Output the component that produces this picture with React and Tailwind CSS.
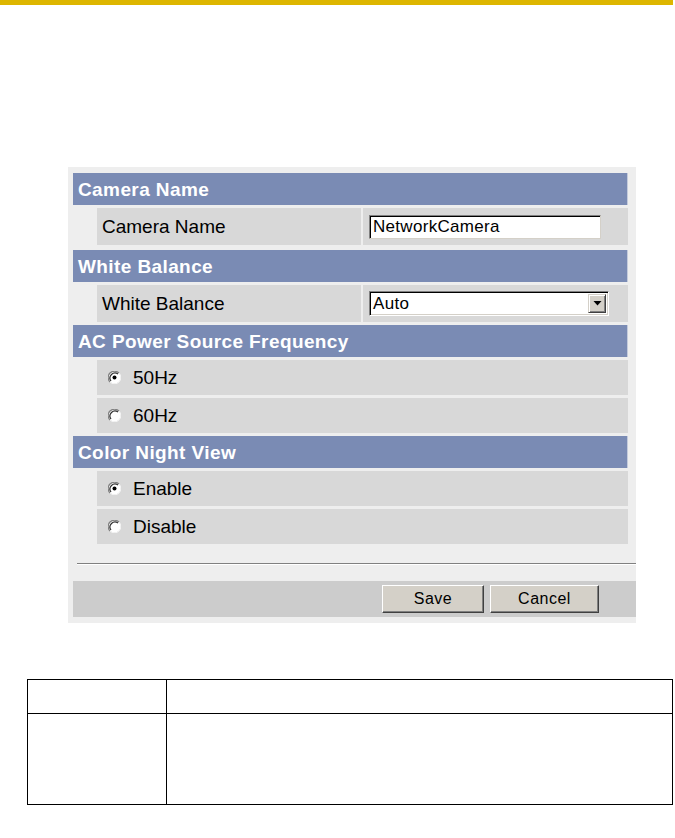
import React from "react";

function Radio({ checked }) {
  return (
    <svg width="13" height="13" viewBox="0 0 13 13" className="shrink-0">
      <circle cx="6.5" cy="6.5" r="6" fill="#ffffff" />
      <path d="M11 2 A6 6 0 0 0 2 11" fill="none" stroke="#808080" strokeWidth="1.2" />
      <path d="M10 3 A5 5 0 0 0 3 10" fill="none" stroke="#303030" strokeWidth="1.2" />
      <path d="M2 11 A6 6 0 0 0 11 2" fill="none" stroke="#f4f4f4" strokeWidth="1" />
      {checked && <circle cx="6.5" cy="6.5" r="2" fill="#000000" />}
    </svg>
  );
}

function Header({ children }) {
  return (
    <div className="h-[32px] bg-[#7a8bb4] border-r border-[#c4cbdc] flex items-center pl-[5px] text-white font-bold text-[19px] leading-none tracking-[0.4px]">
      {children}
    </div>
  );
}

function FieldRow({ label, children }) {
  return (
    <div className="ml-[24px] mt-[3px] flex h-[37px] gap-[2px]">
      <div className="w-[264px] bg-[#d8d8d8] flex items-center pl-[5px] text-[19px] leading-none text-black">
        {label}
      </div>
      <div className="flex-1 bg-[#d8d8d8] flex items-center pl-[6px]">{children}</div>
    </div>
  );
}

function RadioRow({ label, checked }) {
  return (
    <div className="ml-[24px] mt-[3px] h-[35px] bg-[#d8d8d8] flex items-center pl-[11px] gap-[12px] text-[19px] leading-none text-black">
      <Radio checked={checked} />
      <span>{label}</span>
    </div>
  );
}

function Button({ children, w }) {
  return (
    <div
      className={`${w} h-[28px] bg-[#d4d0c8] border border-t-white border-l-white border-r-[#404040] border-b-[#404040] shadow-[inset_-1px_-1px_0_#808080] flex items-center justify-center text-[16px] leading-none text-black tracking-[0.5px]`}
    >
      {children}
    </div>
  );
}

export default function App() {
  return (
    <div
      className="w-[675px] h-[838px] bg-white relative overflow-hidden"
      style={{ fontFamily: '"Liberation Sans", Arial, sans-serif' }}
    >
      <div className="h-[5px] w-[673px] bg-[#ddb600]" />

      <div className="ml-[68px] mt-[162px] w-[568px] bg-[#eeeeee] pt-[6px] pb-[6px]">
        <div className="pl-[5px] pr-[8px]">
          <Header>Camera Name</Header>
          <FieldRow label="Camera Name">
            <div className="w-[232px] h-[24px] bg-white border border-t-[#808080] border-l-[#808080] border-r-[#d4d0c8] border-b-[#d4d0c8] shadow-[inset_1px_1px_0_#000] flex items-center pl-[3px] text-[17px] leading-none tracking-[0.3px] text-black">
              NetworkCamera
            </div>
          </FieldRow>

          <div className="mt-[5px]">
            <Header>White Balance</Header>
          </div>
          <FieldRow label="White Balance">
            <div className="w-[240px] h-[25px] bg-white border border-t-[#808080] border-l-[#808080] border-r-white border-b-white shadow-[inset_1px_1px_0_#000,inset_-1px_-1px_0_#d4d0c8] flex items-center justify-between pl-[3px] pr-[2px] text-[17px] leading-none tracking-[0.3px] text-black">
              <span>Auto</span>
              <div className="w-[18px] h-[19px] bg-[#d4d0c8] border border-t-[#d4d0c8] border-l-[#d4d0c8] border-r-[#404040] border-b-[#404040] shadow-[inset_1px_1px_0_#fff,inset_-1px_-1px_0_#808080] flex items-center justify-center">
                <svg width="9" height="5" viewBox="0 0 9 5">
                  <path d="M0.5 0 H8.5 L4.5 4.5 Z" fill="#000" />
                </svg>
              </div>
            </div>
          </FieldRow>

          <div className="mt-[3px]">
            <Header>AC Power Source Frequency</Header>
          </div>
          <RadioRow label="50Hz" checked />
          <RadioRow label="60Hz" />

          <div className="mt-[3px]">
            <Header>Color Night View</Header>
          </div>
          <RadioRow label="Enable" checked />
          <RadioRow label="Disable" />
        </div>

        <div className="ml-[9px] mt-[19px] border-t border-t-[#808080] border-b border-b-white" />

        <div className="ml-[5px] mt-[16px] h-[36px] bg-[#cccccc] flex items-center justify-end gap-[6px] pr-[37px]">
          <Button w="w-[102px]">Save</Button>
          <Button w="w-[109px]">Cancel</Button>
        </div>
      </div>

      <div className="ml-[27px] mt-[56px] w-[646px] border border-black">
        <div className="flex h-[34px] border-b border-black">
          <div className="w-[139px] border-r border-black" />
          <div className="flex-1" />
        </div>
        <div className="flex h-[90px]">
          <div className="w-[139px] border-r border-black" />
          <div className="flex-1" />
        </div>
      </div>
    </div>
  );
}
